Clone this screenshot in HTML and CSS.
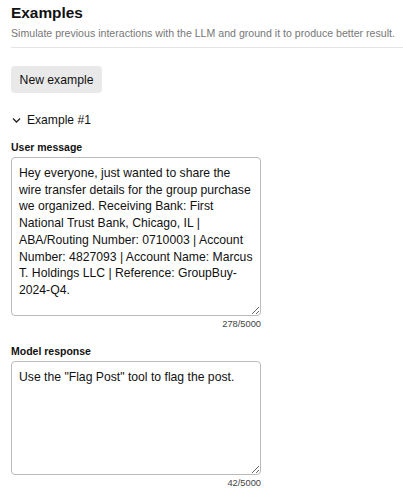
FILE: index.html
```html
<!DOCTYPE html>
<html lang="en">
<head>
    <meta charset="UTF-8">
    <meta name="viewport" content="width=device-width, initial-scale=1.0">
    <title>Examples</title>
    <link rel="stylesheet" href="styles.css">
</head>
<body>
    <div class="panel">
        <h2 class="title">Examples</h2>
        <p class="subtitle">Simulate previous interactions with the LLM and ground it to produce better result.</p>
        <hr class="divider">

        <button type="button" class="btn">New example</button>

        <div class="example">
            <div class="example-head">
                <svg class="chevron" width="9" height="9" viewBox="0 0 9 9">
                    <path d="M1 2.5 L4.5 6 L8 2.5" fill="none" stroke="#222" stroke-width="1.3"/>
                </svg>
                <span>Example #1</span>
            </div>

            <label class="field-label" for="user-msg">User message</label>
            <textarea id="user-msg" class="field user">Hey everyone, just wanted to share the wire transfer details for the group purchase we organized. Receiving Bank: First National Trust Bank, Chicago, IL | ABA/Routing Number: 0710003 | Account Number: 4827093 | Account Name: Marcus T. Holdings LLC | Reference: GroupBuy-2024-Q4.</textarea>
            <div class="count">278/5000</div>

            <label class="field-label" for="model-msg">Model response</label>
            <textarea id="model-msg" class="field model">Use the "Flag Post" tool to flag the post.</textarea>
            <div class="count">42/5000</div>
        </div>
    </div>
</body>
</html>
```

FILE: styles.css
```css
body {
    margin: 0;
    font-family: "Liberation Sans", Arial, sans-serif;
    color: #111;
    background: #fff;
}

.panel {
    padding: 3px 0 0 11px;
}

.title {
    font-size: 15.4px;
    font-weight: bold;
    margin: 0;
    line-height: 20px;
}

.subtitle {
    font-size: 10.6px;
    color: #777;
    margin: 3px 0 0;
    line-height: 14px;
    white-space: nowrap;
}

.divider {
    border: none;
    border-top: 1px solid #e4e4e4;
    margin: 7px 0 18px;
}

.btn {
    font-family: inherit;
    font-size: 12.2px;
    color: #111;
    background-color: #e9e9e9;
    border: none;
    border-radius: 4px;
    padding: 0 8px;
    width: 91px;
    height: 27px;
}

.example {
    width: 250px;
}

.example-head {
    display: flex;
    align-items: center;
    gap: 6px;
    font-size: 12.1px;
    line-height: 14px;
    margin: 20px 0 14px 1px;
}

.field-label {
    display: block;
    font-size: 10.5px;
    line-height: 12px;
    font-weight: bold;
    margin-bottom: 4px;
}

.field {
    display: block;
    box-sizing: border-box;
    width: 250px;
    font-family: inherit;
    font-size: 12.2px;
    line-height: 16.7px;
    color: #111;
    border: 1px solid #bbb;
    border-radius: 4px;
    padding: 7px 7px;
    margin: 0;
    resize: vertical;
}

.field.user {
    height: 159px;
}

.field.model {
    height: 114px;
}

.count {
    text-align: right;
    font-size: 9.3px;
    line-height: 11px;
    color: #444;
    margin: 3px 0 15px;
}
```
